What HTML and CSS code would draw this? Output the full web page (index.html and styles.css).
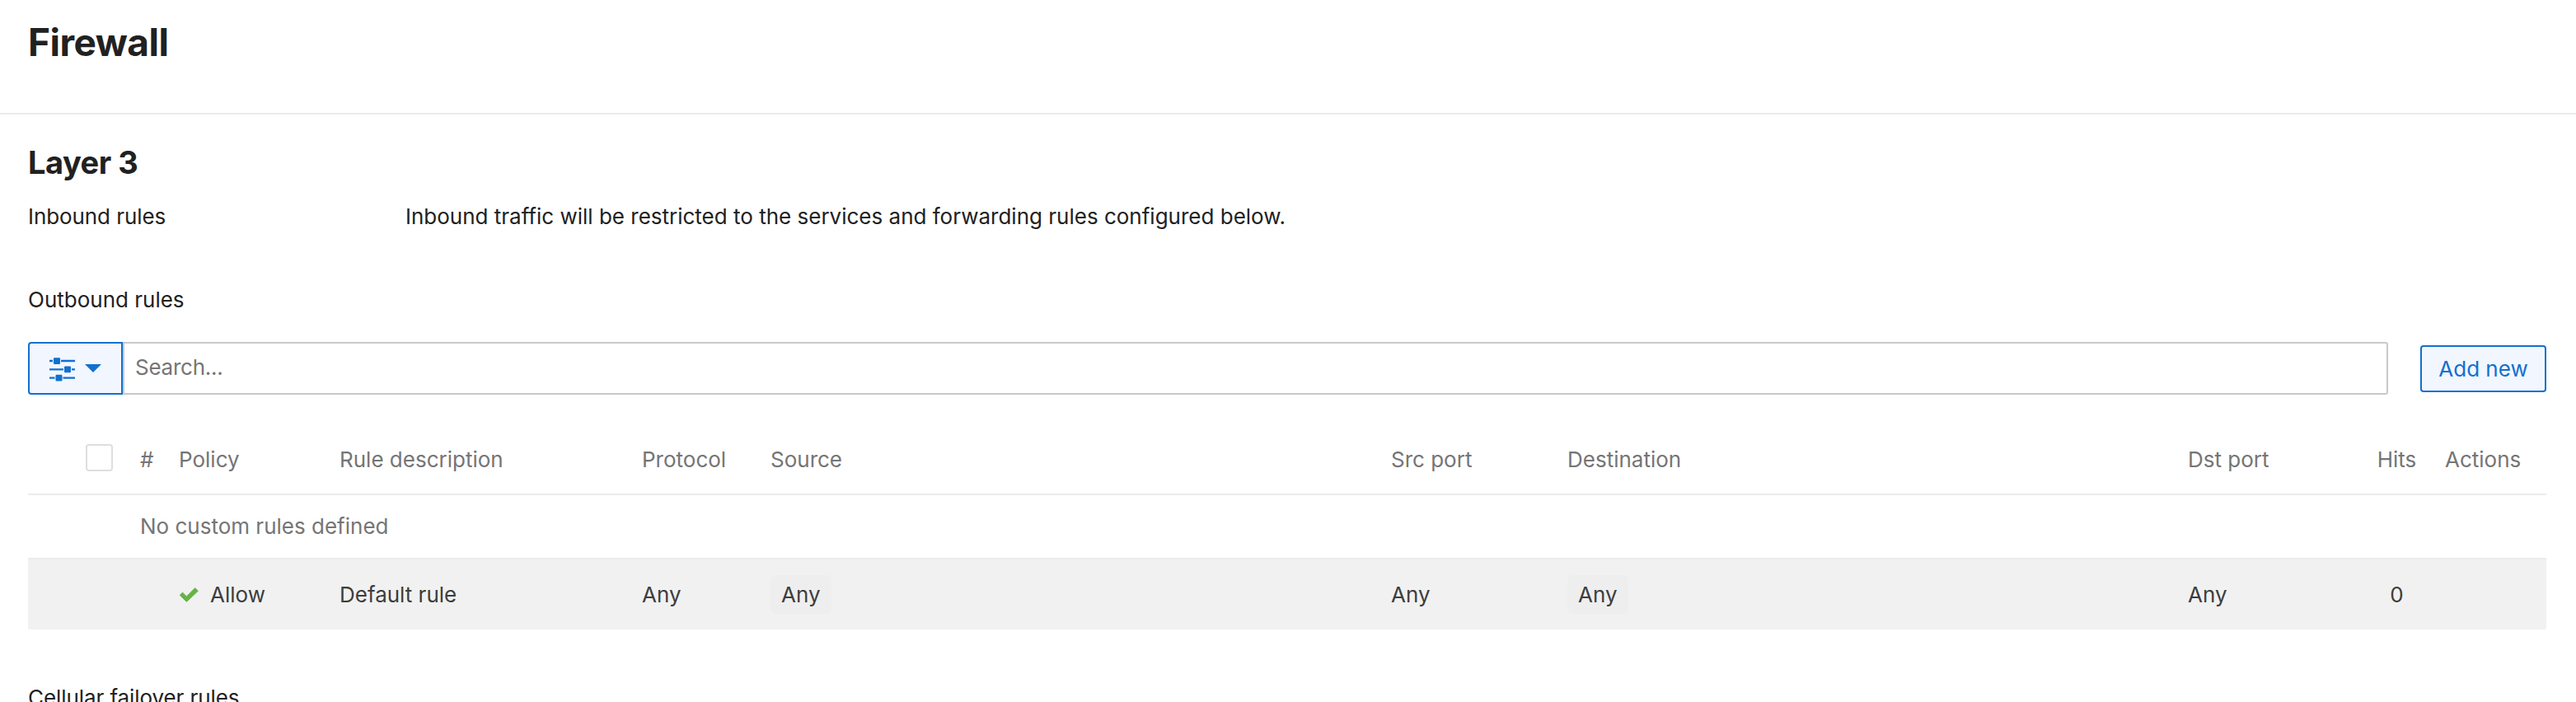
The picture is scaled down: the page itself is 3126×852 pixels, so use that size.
FILE: index.html
```html
<!DOCTYPE html>
<html lang="en">
<head>
<meta charset="utf-8">
<title>Firewall</title>
<link rel="stylesheet" href="styles.css">
</head>
<body>
<header class="page-header"><h1>Firewall</h1></header>
<main class="content">
  <h2>Layer 3</h2>
  <div class="inbound">
    <span class="name">Inbound rules</span>
    <span>Inbound traffic will be restricted to the services and forwarding rules configured below.</span>
  </div>
  <div class="label">Outbound rules</div>
  <div class="toolbar">
    <button class="filter" aria-label="Filter">
      <svg class="sliders" viewBox="0 0 31 29" width="31" height="29">
        <path d="M0 4h31M0 14.400h31M0 24.600h31" stroke="#1170cf" stroke-width="2.400"/>
        <g fill="#1170cf" stroke="#f2f6fe" stroke-width="1">
          <rect x="4.500" y="-.3" width="9" height="8.800" rx="1.800"/>
          <rect x="17.500" y="10" width="9" height="8.800" rx="1.800"/>
          <rect x="7" y="20.200" width="9" height="8.800" rx="1.800"/>
        </g>
      </svg>
      <svg class="caret" viewBox="0 0 20 10" width="20" height="10"><path d="M0 0h20L10 10z" fill="#1170cf"/></svg>
    </button>
    <input class="search" type="text" placeholder="Search...">
    <button class="add">Add new</button>
  </div>
  <div class="table">
    <div class="row head">
      <span class="box"></span><span>#</span><span class="policy">Policy</span><span>Rule description</span><span>Protocol</span><span>Source</span><span>Src port</span><span>Destination</span><span>Dst port</span><span class="hits">Hits</span><span>Actions</span>
    </div>
    <div class="row empty"><span class="message">No custom rules defined</span></div>
    <div class="row rule">
      <span></span><span></span>
      <span class="policy"><svg viewBox="0 0 24 18" width="24" height="18"><path d="M4.100 6.100L9 10.900 19.400 .6 22.900 4.300 9 17.300 .900 9.300z" transform="translate(.4)" fill="#67b346" stroke="#67b346" stroke-width="1" stroke-linejoin="round"/></svg>Allow</span>
      <span>Default rule</span><span>Any</span><span><span class="chip">Any</span></span><span>Any</span><span><span class="chip">Any</span></span><span>Any</span><span class="hits">0</span><span></span>
    </div>
  </div>
  <div class="label cellular">Cellular failover rules</div>
</main>
</body>
</html>
```

FILE: styles.css
```css
* { box-sizing: border-box; }
html { overflow: hidden; }
body {
  margin: 0;
  height: 852px;
  overflow: hidden;
  background: #fff;
  color: #212121;
  font: 26px/33px Inter, sans-serif;
}
h1, h2 { margin: 0; font-weight: 700; }
h1 { font-size: 46px; line-height: 56px; letter-spacing: -.5px; }
h2 { font-size: 38px; line-height: 48px; letter-spacing: -.5px; }
.page-header { height: 139px; padding: 23px 34px 0; border-bottom: 2px solid #ebebeb; }
.content { padding: 34px 36px 0 34px; }
.inbound { display: grid; grid-template-columns: 458px 1fr; margin-top: 25px; }
.name { letter-spacing: -.08px; }
.label { margin-top: 68px; }
.toolbar { display: flex; align-items: center; height: 64px; margin-top: 35px; }
.toolbar button {
  background: #f2f6fe;
  border: 2px solid #1170cf;
  color: #1170cf;
  font: inherit;
  padding: 0;
}
.filter {
  display: flex;
  align-items: center;
  width: 115px;
  height: 64px;
  border-radius: 4px 0 0 4px;
}
.toolbar .filter { padding: 3px 0 0 24px; gap: 12px; }
.caret { margin-bottom: 4px; }
.search {
  flex: 1;
  height: 64px;
  padding: 0 13px 3px;
  border: 2px solid #c9c9c9;
  border-radius: 0 3px 3px 0;
  background: #fff;
  font: inherit;
}
.search::placeholder { color: #757575; opacity: 1; letter-spacing: -.25px; }
.add { width: 153px; height: 57px; margin-left: 39px; border-radius: 4px; }
.row {
  display: grid;
  grid-template-columns: 136px 47px 195px 367px 156px 753px 214px 753px 213px 99px 1fr;
  align-items: center;
  white-space: nowrap;
}
.head { height: 87px; padding-top: 2px; margin-top: 35px; color: #757575; border-bottom: 2px solid #ebebeb; }
.box { width: 33px; height: 33px; margin: 0 0 4px 70px; border: 2px solid #dedede; border-radius: 4px; background: #fff; }
.empty { height: 76px; padding-bottom: 1px; color: #757575; }
.message { grid-column: 2 / -1; }
.rule { height: 87px; background: #f1f1f1; border-top: 2px solid #ebebeb; color: #3c3d3e; }
.policy { display: flex; align-items: center; gap: 14px; }
.chip {
  display: inline-block;
  padding: 7px 13px;
  border-radius: 7px;
  background: #eee;
}
.hits { padding-right: 18px; text-align: center; }
.cellular { margin-top: 66px; letter-spacing: -.08px; }
```
